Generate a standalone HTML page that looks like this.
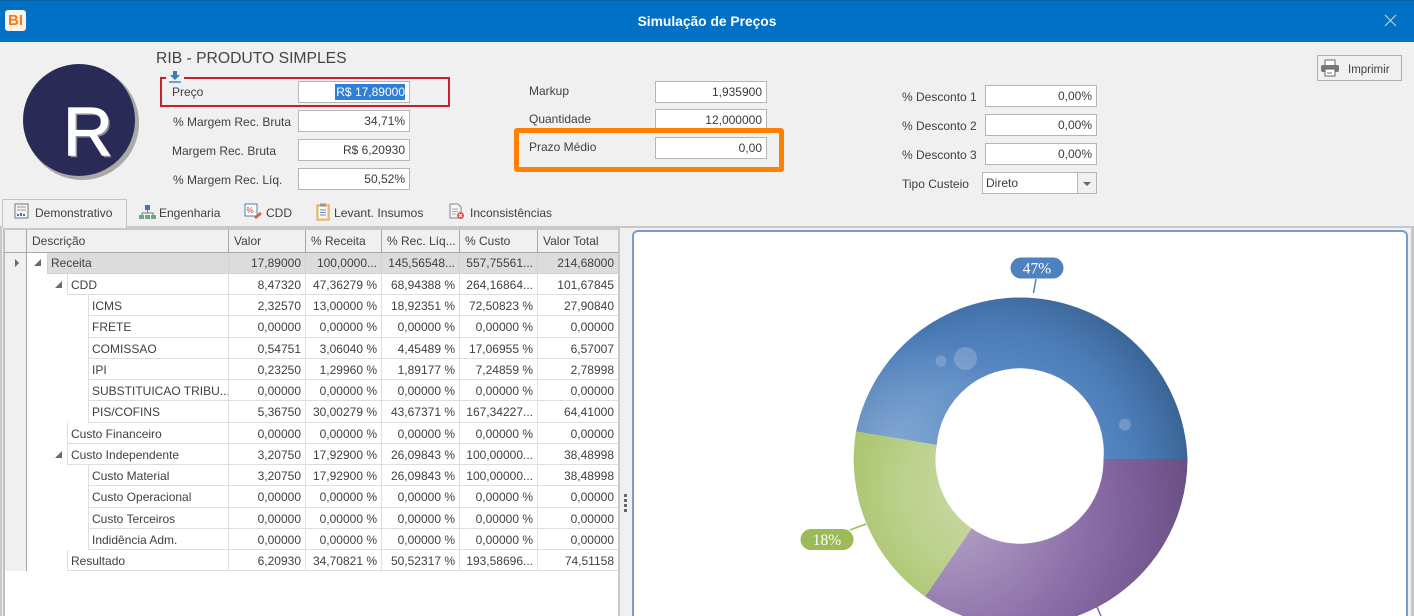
<!DOCTYPE html>
<html style="height:616px;overflow:hidden"><head><meta charset="utf-8">
<style>
html,body{margin:0;padding:0}
body{width:1414px;height:616px;overflow:hidden;background:#f0f0f0;position:relative;font:12px/14px "Liberation Sans",sans-serif;color:#404040}
div,span{position:absolute;white-space:nowrap;box-sizing:border-box}
.l{height:14px}
.i{height:22px;background:#fff;border:1px solid #b5b5b5;text-align:right;padding:3px 4px 0 0;line-height:15px;color:#3a3a3a}
.h{top:230px;height:23px;background:#f0f0f0;border-right:1px solid #a8a8a8;border-bottom:1px solid #a8a8a8;padding:4px 0 0 5px}
.r{left:0;width:619px;height:21px}
.w{height:22px}
.c{top:0;height:100%;border-right:1px solid #dedede;border-bottom:1px solid #dedede;padding-top:4px;line-height:15px;overflow:hidden;background:#fff}
.d{padding-left:3px;border-left:1px solid #dedede}
.v{left:229px;width:77px;text-align:right;padding-right:4px}
.p{left:306px;width:76px;text-align:right;padding-right:4px}
.q{left:382px;width:78px;text-align:right;padding-right:4px}
.u{left:460px;width:78px;text-align:right;padding-right:4px}
.t{left:538px;width:81px;text-align:right;padding-right:4px}
.a{width:0;height:0;border-style:solid;border-width:0 0 7px 7px;border-color:transparent transparent #6a6a6a transparent}
.g .c{background:#dcdcdc;border-color:#d2d2d2;padding-top:3px}
</style></head><body>
<div style="left:0;top:0;width:1414px;height:42px;background:#0071c5;border-top:1px solid #0a5fa5"></div>
<div style="left:5px;top:10px;width:21px;height:21px;background:#fdf3ea;border-radius:3px;color:#f47a20;font:bold 15px/21px 'Liberation Sans',sans-serif;text-align:center">BI</div>
<div style="left:0;width:1414px;top:14px;text-align:center;color:#fff;font:bold 13.8px/15px 'Liberation Sans',sans-serif">Simulação de Preços</div>
<svg style="position:absolute;left:1384px;top:14px" width="13" height="13"><path d="M1 1L12 12M12 1L1 12" stroke="#b9d8f0" stroke-width="1.1" fill="none"/></svg>

<div style="left:156px;top:50px;font-size:15.7px;line-height:18px;color:#444">RIB - PRODUTO SIMPLES</div>
<div style="left:25px;top:66px;width:114px;height:114px;border-radius:50%;background:#a9a9a9"></div>
<div style="left:23px;top:64px;width:112px;height:112px;border-radius:50%;background:#2a2a56"></div>
<div style="left:63px;top:97px;font:69px/70px 'Liberation Sans',sans-serif;color:#fff;-webkit-text-stroke:1px #fff;text-shadow:2px 2px 0 #8d8d9e">R</div>

<div style="left:160px;top:77px;width:290px;height:30px;border:2px solid #c8202a"></div>
<div style="left:166px;top:70px;width:18px;height:12px;background:#f0f0f0"></div>
<svg style="position:absolute;left:168px;top:70px" width="14" height="14"><path d="M5 1h4v4h3L7 10 2 5h3z" fill="#3a7cc0"/><path d="M1 12h12" stroke="#3a7cc0" stroke-width="1.4"/></svg>
<div class="l" style="left:172px;top:85px">Preço</div>
<div class="i" style="left:298px;top:81px;width:112px"><span style="right:4px;top:2px;height:16px;width:70px;background:#2f7fd6;color:#fff;line-height:16px;text-align:right">R$ 17,89000</span></div>
<div class="l" style="left:173px;top:115px">% Margem Rec. Bruta</div>
<div class="i" style="left:298px;top:110px;width:112px">34,71%</div>
<div class="l" style="left:172px;top:144px">Margem Rec. Bruta</div>
<div class="i" style="left:298px;top:139px;width:112px">R$ 6,20930</div>
<div class="l" style="left:173px;top:173px">% Margem Rec. Líq.</div>
<div class="i" style="left:298px;top:168px;width:112px">50,52%</div>

<div class="l" style="left:529px;top:84px">Markup</div>
<div class="i" style="left:655px;top:81px;width:112px">1,935900</div>
<div class="l" style="left:529px;top:112px">Quantidade</div>
<div class="i" style="left:655px;top:109px;width:112px">12,000000</div>
<div style="left:514px;top:128px;width:270px;height:44px;border:5px solid #ff8000;border-radius:3px"></div>
<div class="l" style="left:529px;top:140px">Prazo Médio</div>
<div class="i" style="left:655px;top:137px;width:112px">0,00</div>

<div class="l" style="left:902px;top:90px">% Desconto 1</div>
<div class="i" style="left:985px;top:85px;width:112px">0,00%</div>
<div class="l" style="left:902px;top:119px">% Desconto 2</div>
<div class="i" style="left:985px;top:114px;width:112px">0,00%</div>
<div class="l" style="left:902px;top:148px">% Desconto 3</div>
<div class="i" style="left:985px;top:143px;width:112px">0,00%</div>
<div class="l" style="left:902px;top:177px">Tipo Custeio</div>
<div class="i" style="left:982px;top:172px;width:115px;text-align:left;padding-left:3px">Direto</div>
<div style="left:1077px;top:173px;width:19px;height:20px;background:#f0f0f0;border-left:1px solid #b5b5b5"></div>
<div style="left:1083px;top:182px;border-style:solid;border-width:4px 4px 0 4px;border-color:#666 transparent transparent transparent"></div>

<div style="left:1317px;top:55px;width:85px;height:26px;border:1px solid #b0b0b0;background:#f0f0f0"></div>
<svg style="position:absolute;left:1320px;top:59px" width="20" height="18"><rect x="5" y="1" width="10" height="6" fill="#fff" stroke="#666"/><rect x="1" y="6" width="18" height="7" rx="2" fill="#777"/><rect x="5" y="10" width="10" height="7" fill="#fff" stroke="#666"/><path d="M7 14h5" stroke="#3a7cc0"/></svg>
<div class="l" style="left:1348px;top:63px;font-size:11.5px">Imprimir</div>

<div style="left:2px;top:199px;width:125px;height:29px;background:#f0f0f0;border:1px solid #c4c4c4;border-bottom:none"></div>
<svg style="position:absolute;left:14px;top:203px" width="15" height="16"><rect x="1" y="1" width="13" height="14" fill="#f5f5f5" stroke="#777"/><path d="M3 4h9M3 7h9" stroke="#999"/><path d="M4 13v-2M7 13v-3M10 13v-2" stroke="#3a7cc0" stroke-width="2"/></svg>
<div class="l" style="left:35px;top:206px">Demonstrativo</div>
<svg style="position:absolute;left:139px;top:204px" width="17" height="16"><rect x="6" y="1" width="5" height="5" fill="#3f74b5"/><path d="M8.500 6v3M3 11V9h11v2" stroke="#777" fill="none"/><rect x="0" y="11" width="5" height="4" fill="#6aa88e"/><rect x="6" y="11" width="5" height="4" fill="#6aa88e"/><rect x="12" y="11" width="5" height="4" fill="#6aa88e"/></svg>
<div class="l" style="left:159px;top:206px">Engenharia</div>
<svg style="position:absolute;left:244px;top:203px" width="19" height="17"><rect x="1" y="1" width="12" height="12" fill="#fff" stroke="#4a7fb8"/><text x="2.500" y="10" font-size="8" font-family="Liberation Sans" fill="#c0392b">%</text><path d="M10 14l6-5 2 2-6 5z" fill="#e0603a"/></svg>
<div class="l" style="left:266px;top:206px">CDD</div>
<svg style="position:absolute;left:316px;top:203px" width="14" height="18"><rect x="1" y="2" width="12" height="15" fill="#f3d9a6" stroke="#d69a3c"/><rect x="3" y="4" width="8" height="11" fill="#f7f7f7"/><rect x="4" y="0.500" width="6" height="3" fill="#999"/><path d="M4 7h6M4 9.500h6M4 12h6" stroke="#6a8fb8"/></svg>
<div class="l" style="left:334px;top:206px;font-size:12.2px">Levant. Insumos</div>
<svg style="position:absolute;left:449px;top:203px" width="16" height="17"><path d="M1 1h8l3 3v11H1z" fill="#f5f5f5" stroke="#888"/><path d="M3 6h6M3 8.500h6M3 11h4" stroke="#aaa"/><circle cx="11.500" cy="12.500" r="3.500" fill="#d9534f"/><path d="M10 11l3 3M13 11l-3 3" stroke="#fff"/></svg>
<div class="l" style="left:470px;top:206px">Inconsistências</div>

<div style="left:127px;top:226px;width:1287px;height:2px;background:#c8c8c8"></div>
<div style="left:0;top:226px;width:2px;height:390px;background:#c8c8c8"></div>
<div style="left:1411px;top:226px;width:3px;height:390px;background:#c8c8c8"></div>
<div style="left:2px;top:228px;width:1409px;height:388px;background:#f0f0f0"></div>

<div style="left:3px;top:228px;width:616px;height:388px;background:#fff;border-left:2px solid #c0c0c0"></div>
<div style="left:3px;top:228px;width:616px;height:2px;background:#c8c8c8"></div>
<div style="left:5px;top:230px;width:22px;height:341px;background:#f0f0f0;border-right:1px solid #a8a8a8"></div>
<div style="left:5px;top:252px;width:21px;height:1px;background:#a8a8a8"></div>
<div class="h" style="left:27px;width:202px">Descrição</div>
<div class="h" style="left:229px;width:77px">Valor</div>
<div class="h" style="left:306px;width:76px">% Receita</div>
<div class="h" style="left:382px;width:78px">% Rec. Líq...</div>
<div class="h" style="left:460px;width:78px">% Custo</div>
<div class="h" style="left:538px;width:81px">Valor Total</div>

<div style="left:15px;top:259px;border-style:solid;border-width:4px 0 4px 4px;border-color:transparent transparent transparent #666"></div>
<div class="a" style="left:34px;top:259px"></div>
<div class="a" style="left:55px;top:281px"></div>
<div class="a" style="left:55px;top:451px"></div>

<div class="r g" style="top:253px"><div class="c d" style="left:47px;width:182px">Receita</div><div class="c v">17,89000</div><div class="c p">100,0000...</div><div class="c q">145,56548...</div><div class="c u">557,75561...</div><div class="c t">214,68000</div></div>
<div class="r" style="top:274px"><div class="c d" style="left:67px;width:162px">CDD</div><div class="c v">8,47320</div><div class="c p">47,36279 %</div><div class="c q">68,94388 %</div><div class="c u">264,16864...</div><div class="c t">101,67845</div></div>
<div class="r" style="top:295px"><div class="c d" style="left:88px;width:141px">ICMS</div><div class="c v">2,32570</div><div class="c p">13,00000 %</div><div class="c q">18,92351 %</div><div class="c u">72,50823 %</div><div class="c t">27,90840</div></div>
<div class="r w" style="top:316px"><div class="c d" style="left:88px;width:141px">FRETE</div><div class="c v">0,00000</div><div class="c p">0,00000 %</div><div class="c q">0,00000 %</div><div class="c u">0,00000 %</div><div class="c t">0,00000</div></div>
<div class="r" style="top:338px"><div class="c d" style="left:88px;width:141px">COMISSAO</div><div class="c v">0,54751</div><div class="c p">3,06040 %</div><div class="c q">4,45489 %</div><div class="c u">17,06955 %</div><div class="c t">6,57007</div></div>
<div class="r" style="top:359px"><div class="c d" style="left:88px;width:141px">IPI</div><div class="c v">0,23250</div><div class="c p">1,29960 %</div><div class="c q">1,89177 %</div><div class="c u">7,24859 %</div><div class="c t">2,78998</div></div>
<div class="r" style="top:380px"><div class="c d" style="left:88px;width:141px">SUBSTITUICAO TRIBU...</div><div class="c v">0,00000</div><div class="c p">0,00000 %</div><div class="c q">0,00000 %</div><div class="c u">0,00000 %</div><div class="c t">0,00000</div></div>
<div class="r w" style="top:401px"><div class="c d" style="left:88px;width:141px">PIS/COFINS</div><div class="c v">5,36750</div><div class="c p">30,00279 %</div><div class="c q">43,67371 %</div><div class="c u">167,34227...</div><div class="c t">64,41000</div></div>
<div class="r" style="top:423px"><div class="c d" style="left:67px;width:162px">Custo Financeiro</div><div class="c v">0,00000</div><div class="c p">0,00000 %</div><div class="c q">0,00000 %</div><div class="c u">0,00000 %</div><div class="c t">0,00000</div></div>
<div class="r" style="top:444px"><div class="c d" style="left:67px;width:162px">Custo Independente</div><div class="c v">3,20750</div><div class="c p">17,92900 %</div><div class="c q">26,09843 %</div><div class="c u">100,00000...</div><div class="c t">38,48998</div></div>
<div class="r" style="top:465px"><div class="c d" style="left:88px;width:141px">Custo Material</div><div class="c v">3,20750</div><div class="c p">17,92900 %</div><div class="c q">26,09843 %</div><div class="c u">100,00000...</div><div class="c t">38,48998</div></div>
<div class="r w" style="top:486px"><div class="c d" style="left:88px;width:141px">Custo Operacional</div><div class="c v">0,00000</div><div class="c p">0,00000 %</div><div class="c q">0,00000 %</div><div class="c u">0,00000 %</div><div class="c t">0,00000</div></div>
<div class="r" style="top:508px"><div class="c d" style="left:88px;width:141px">Custo Terceiros</div><div class="c v">0,00000</div><div class="c p">0,00000 %</div><div class="c q">0,00000 %</div><div class="c u">0,00000 %</div><div class="c t">0,00000</div></div>
<div class="r" style="top:529px"><div class="c d" style="left:88px;width:141px">Indidência Adm.</div><div class="c v">0,00000</div><div class="c p">0,00000 %</div><div class="c q">0,00000 %</div><div class="c u">0,00000 %</div><div class="c t">0,00000</div></div>
<div class="r" style="top:550px"><div class="c d" style="left:67px;width:162px">Resultado</div><div class="c v">6,20930</div><div class="c p">34,70821 %</div><div class="c q">50,52317 %</div><div class="c u">193,58696...</div><div class="c t">74,51158</div></div>

<div style="left:618px;top:228px;width:2px;height:388px;background:#c8c8c8"></div>
<div style="left:624px;top:494px;width:3px;height:3px;background:#666"></div>
<div style="left:624px;top:499px;width:3px;height:3px;background:#666"></div>
<div style="left:624px;top:504px;width:3px;height:3px;background:#666"></div>
<div style="left:624px;top:509px;width:3px;height:3px;background:#666"></div>

<div style="left:632px;top:230px;width:776px;height:386px;background:#fff;border:2px solid #7a9ccb;border-bottom:none;border-radius:6px 6px 0 0"></div>
<svg style="position:absolute;left:0;top:0" width="1414" height="616">
<defs>
<radialGradient id="b" gradientUnits="userSpaceOnUse" cx="990" cy="480" r="205"><stop offset=".5" stop-color="#5a8ac4"/><stop offset=".74" stop-color="#4b7cb8"/><stop offset="1" stop-color="#3a6392"/></radialGradient>
<radialGradient id="b2" gradientUnits="userSpaceOnUse" cx="890" cy="445" r="120"><stop offset="0" stop-color="#fff" stop-opacity=".25"/><stop offset="1" stop-color="#fff" stop-opacity="0"/></radialGradient>
<radialGradient id="gn" gradientUnits="userSpaceOnUse" cx="985" cy="490" r="145"><stop offset="0" stop-color="#cddaa9"/><stop offset=".55" stop-color="#bcd18d"/><stop offset="1" stop-color="#a9c46c"/></radialGradient>
<radialGradient id="pu" gradientUnits="userSpaceOnUse" cx="950" cy="510" r="260"><stop offset="0" stop-color="#b5a5c8"/><stop offset=".55" stop-color="#8a6ba6"/><stop offset="1" stop-color="#634a7e"/></radialGradient>
</defs>
<path d="M1033.500 293L1036 279" stroke="#4f81bd" stroke-width="1.500"/>
<path d="M866 524L850 530" stroke="#9bbb59" stroke-width="1.500"/>
<path d="M1097 607L1101 616" stroke="#8064a2" stroke-width="1.500"/>
<path d="M856 431.500A167.500 167.500 0 0 1 1187.500 459H1103.500A83.500 83.500 0 0 0 936.700 445Z" fill="url(#b)"/>
<path d="M856 431.500A167.500 167.500 0 0 1 1187.500 459H1103.500A83.500 83.500 0 0 0 936.700 445Z" fill="url(#b2)"/>
<path d="M1187.500 459A167.500 167.500 0 0 1 925 596.500L971.700 528.300A83.500 83.500 0 0 0 1103.500 459Z" fill="url(#pu)"/>
<path d="M856 431.500A167.500 167.500 0 0 0 925 596.500L971.700 528.300A83.500 83.500 0 0 1 936.700 445Z" fill="url(#gn)"/>
<circle cx="965.500" cy="358.500" r="11.500" fill="#fff" opacity=".2"/>
<circle cx="941" cy="361" r="5.500" fill="#fff" opacity=".18"/>
<circle cx="1125" cy="424.500" r="6" fill="#fff" opacity=".2"/>
<rect x="1010.500" y="257.500" width="53" height="21" rx="10.500" fill="#4f81bd"/>
<rect x="800.500" y="529" width="53" height="21" rx="10.500" fill="#9bbb59"/>
<text x="1037" y="273.500" text-anchor="middle" font-family="Liberation Serif" font-size="15.500" fill="#fff">47%</text>
<text x="827" y="545" text-anchor="middle" font-family="Liberation Serif" font-size="15.500" fill="#fff">18%</text>
</svg>
</body></html>
